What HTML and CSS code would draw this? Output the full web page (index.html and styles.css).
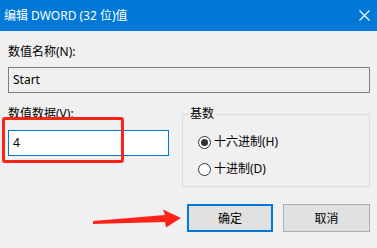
FILE: index.html
```html
<!DOCTYPE html>
<html>
<head>
<meta charset="utf-8">
<link rel="stylesheet" href="styles.css">
</head>
<body>
<div class="dialog">
  <div class="titlebar">
    <span class="title">编辑 DWORD (32 位)值</span>
    <svg class="close" width="11" height="11" viewBox="0 0 11 11"><path d="M0.5 0.5 L10.5 10.5 M10.5 0.5 L0.5 10.5" stroke="#fff" stroke-width="1.1" fill="none"/></svg>
  </div>
  <div class="content">
    <div class="label first">数值名称(N):</div>
    <div class="textbox readonly">Start</div>
    <div class="row">
      <div class="left">
        <div class="label">数值数据(V):</div>
        <div class="textbox active">4</div>
      </div>
      <fieldset class="group">
        <legend>基数</legend>
        <div class="radio-row"><span class="radio checked"></span><span>十六进制(H)</span></div>
        <div class="radio-row second"><span class="radio"></span><span>十进制(D)</span></div>
      </fieldset>
    </div>
    <div class="buttons">
      <div class="btn default">确定</div>
      <div class="btn">取消</div>
    </div>
  </div>
  <div class="highlight"></div>
  <svg class="arrow" width="377" height="248" viewBox="0 0 377 248"><polygon points="93,221 165,215 163,209.5 181,218 166,227.5 165,222 93,224" fill="#ff2218"/></svg>
</div>
</body>
</html>
```

FILE: styles.css
```css
* { box-sizing: border-box; }
html, body { margin: 0; padding: 0; }
body {
  width: 377px;
  height: 248px;
  overflow: hidden;
  background: #f0f0f0;
  font-family: "Noto Sans", "Noto Sans CJK SC", sans-serif;
  font-size: 12px;
  color: #000;
}
.dialog {
  position: relative;
  width: 377px;
  height: 248px;
  background: #f0f0f0;
}
.titlebar {
  height: 31px;
  background: #0078d7;
  color: #fff;
  display: flex;
  align-items: center;
  justify-content: space-between;
  padding: 0 6px 0 4px;
}
.title { line-height: 16px; }
.close { display: block; margin-top: -1px; margin-right: 1px; }
.content {
  padding: 0 7px 0 8px;
}
.label {
  line-height: 16px;
  height: 16px;
}
.label.first { margin-top: 13px; }
.textbox {
  height: 26px;
  margin-top: 7px;
  padding-left: 4px;
  display: flex;
  align-items: center;
  line-height: 16px;
}
.textbox.readonly {
  border: 1px solid #7e7e7e;
  background: #f0f0f0;
}
.textbox.active {
  border: 1px solid #0078d7;
  background: #fff;
  margin-top: 8px;
  width: 161px;
}
.row {
  display: flex;
  gap: 13px;
  margin-top: 13px;
}
.left { width: 161px; }
.group {
  margin: 0;
  width: 188px;
  border: 1px solid #dcdcdc;
  padding: 12px 0 9px 15px;
  min-width: 0;
}
.group legend {
  padding: 0 2px;
  margin-left: -10px;
  line-height: 16px;
}
.radio-row {
  display: flex;
  align-items: center;
  gap: 3px;
  line-height: 16px;
  height: 16px;
}
.radio-row.second { margin-top: 11px; }
.radio {
  width: 13px;
  height: 13px;
  border: 1px solid #333;
  border-radius: 50%;
  background: #fff;
  display: flex;
  align-items: center;
  justify-content: center;
}
.radio.checked::after {
  content: "";
  width: 7px;
  height: 7px;
  border-radius: 50%;
  background: #333;
}
.buttons {
  display: flex;
  justify-content: flex-end;
  gap: 10px;
  margin-top: 17px;
}
.btn {
  width: 87px;
  height: 28px;
  background: #e1e1e1;
  border: 1px solid #adadad;
  display: flex;
  align-items: center;
  justify-content: center;
}
.btn.default {
  width: 86px;
  border: 2px solid #0078d7;
}
.highlight {
  position: absolute;
  left: 2px;
  top: 117px;
  width: 122px;
  height: 46px;
  border: 3px solid #ff2218;
  border-radius: 3px;
}
.arrow {
  position: absolute;
  left: 0;
  top: 0;
}
```
